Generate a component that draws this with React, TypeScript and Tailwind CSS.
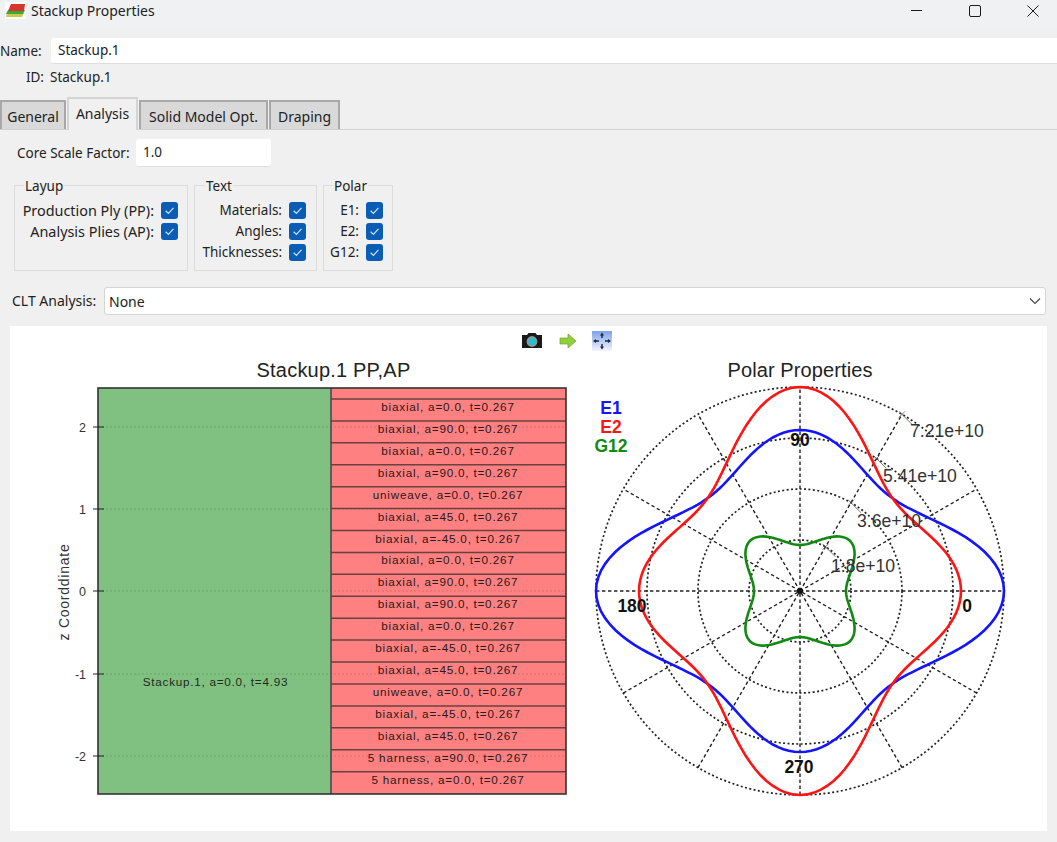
import React from "react";

const ui = { fontFamily: '"Noto Sans", "Open Sans", sans-serif' };
const plotFont = '"Liberation Sans", Arial, sans-serif';

const rows = [
  "biaxial, a=0.0, t=0.267",
  "biaxial, a=90.0, t=0.267",
  "biaxial, a=0.0, t=0.267",
  "biaxial, a=90.0, t=0.267",
  "uniweave, a=0.0, t=0.267",
  "biaxial, a=45.0, t=0.267",
  "biaxial, a=-45.0, t=0.267",
  "biaxial, a=0.0, t=0.267",
  "biaxial, a=90.0, t=0.267",
  "biaxial, a=90.0, t=0.267",
  "biaxial, a=0.0, t=0.267",
  "biaxial, a=-45.0, t=0.267",
  "biaxial, a=45.0, t=0.267",
  "uniweave, a=0.0, t=0.267",
  "biaxial, a=-45.0, t=0.267",
  "biaxial, a=45.0, t=0.267",
  "5 harness, a=90.0, t=0.267",
  "5 harness, a=0.0, t=0.267",
];

function Check({ label }: { label: string }) {
  return (
    <div className="flex h-[21px] items-center justify-end gap-[7px]">
      <span className="whitespace-nowrap">{label}</span>
      <span className="flex h-[17px] w-[17px] items-center justify-center rounded-[3px] bg-[#0a5db5]">
        <svg width="11" height="11" viewBox="0 0 10 10" fill="none">
          <path d="M1.5 5.2 4 7.6 8.6 2.6" stroke="#cfe2f5" strokeWidth="1.1" />
        </svg>
      </span>
    </div>
  );
}

function Group({ title, width, items, titleLeft }: { title: string; width: string; items: string[]; titleLeft: string }) {
  return (
    <div className={`relative h-[86px] border border-[#dcdcdc] pt-[14px] ${width}`}>
      <span className={`absolute -top-[9px] bg-[#f0f0f0] px-[1px] text-[13.5px] leading-[18px] ${titleLeft}`}>{title}</span>
      {items.map((i) => (
        <Check key={i} label={i} />
      ))}
    </div>
  );
}

function polarPath(a: number, b: number, c: number, cx: number, cy: number) {
  const pts: string[] = [];
  for (let d = 0; d <= 360; d += 2) {
    const t = (d * Math.PI) / 180;
    const s2 = Math.sin(t) ** 2;
    const c2 = Math.cos(t) ** 2;
    const r = 1 / (a * c2 * c2 + b * s2 * s2 + c * s2 * c2);
    pts.push(`${(cx + r * Math.cos(t)).toFixed(1)} ${(cy - r * Math.sin(t)).toFixed(1)}`);
  }
  return "M" + pts.join("L") + "Z";
}

function StackChart() {
  const top = 399;
  const h = 21.92;
  return (
    <svg width="580" height="476" viewBox="10 355 580 476" style={{ fontFamily: plotFont }}>
      <text x="333.5" y="377" textAnchor="middle" fontSize="20" letterSpacing="0.2" fill="#222">Stackup.1 PP,AP</text>
      <rect x="98" y="388" width="233" height="406" fill="#80c080" />
      <rect x="331" y="388" width="235" height="406" fill="#ff8080" />
      {[427, 509, 591, 674, 756].map((y) => (
        <line key={y} x1="98" x2="566" y1={y} y2={y} stroke="#000" strokeOpacity="0.14" strokeWidth="1" strokeDasharray="2 2" />
      ))}
      {rows.map((r, i) => (
        <g key={i}>
          <line x1="331" x2="566" y1={top + i * h} y2={top + i * h} stroke="#6a4040" strokeWidth="1.5" />
          <text x="448" y={top + i * h + 12} textAnchor="middle" fontSize="11.7" letterSpacing="0.8" fill="#2a1a1a">{r}</text>
        </g>
      ))}
      <line x1="331" x2="331" y1="388" y2="794" stroke="#4a4a4a" strokeWidth="1.6" />
      <rect x="98" y="388" width="468" height="406" fill="none" stroke="#333" strokeWidth="1.6" />
      <text x="215.5" y="686" textAnchor="middle" fontSize="11.7" letterSpacing="0.75" fill="#1d2d1d">Stackup.1, a=0.0, t=4.93</text>
      {[
        [427, "2"],
        [509, "1"],
        [591, "0"],
        [674, "-1"],
        [756, "-2"],
      ].map(([y, l]) => (
        <g key={l as string}>
          <line x1="93" x2="104" y1={y as number} y2={y as number} stroke="#222" strokeWidth="1" />
          <text x="86" y={(y as number) + 4.5} textAnchor="end" fontSize="12.5" fill="#333">{l}</text>
        </g>
      ))}
      <text transform="translate(69 592) rotate(-90)" textAnchor="middle" fontSize="14" letterSpacing="0.75" fill="#333">z Coorddinate</text>
    </svg>
  );
}

function PolarChart() {
  const cx = 800;
  const cy = 591;
  const e1 = polarPath(1 / 204, 1 / 161, 0.01942, cx, cy);
  const e2 = polarPath(1 / 161, 1 / 204, 0.01942, cx, cy);
  const g = polarPath(1 / 46, 1 / 46, 0.01301, cx, cy);
  const spokes = [0, 30, 60, 90, 120, 150];
  const marks = [
    [51, "1.8e+10", 831, 572],
    [102, "3.6e+10", 857, 527],
    [153, "5.41e+10", 883, 482],
    [204, "7.21e+10", 910, 437],
  ] as const;
  return (
    <svg width="457" height="476" viewBox="590 355 457 476" style={{ fontFamily: plotFont }}>
      <text x="800" y="377" textAnchor="middle" fontSize="20" letterSpacing="0.1" fill="#222">Polar Properties</text>
      {spokes.map((d) => {
        const t = (d * Math.PI) / 180;
        return (
          <line
            key={d}
            x1={cx - 204 * Math.cos(t)}
            y1={cy + 204 * Math.sin(t)}
            x2={cx + 204 * Math.cos(t)}
            y2={cy - 204 * Math.sin(t)}
            stroke="#222"
            strokeWidth="1.4"
            strokeDasharray="3.4 2.6"
          />
        );
      })}
      {[51, 102, 153, 204].map((r) => (
        <circle key={r} cx={cx} cy={cy} r={r} fill="none" stroke="#222" strokeWidth="1.7" strokeDasharray="2 2.4" />
      ))}
      <circle cx={cx} cy={cy} r="3" fill="#111" />
      <path d={e1} fill="none" stroke="#1414ff" strokeWidth="2.6" />
      <path d={e2} fill="none" stroke="#ff1414" strokeWidth="2.6" />
      <path d={g} fill="none" stroke="#118a11" strokeWidth="2.6" />
      {marks.map(([r, l, x, y]) => {
        const px = cx + r * Math.cos(Math.PI / 3);
        const py = cy - r * Math.sin(Math.PI / 3);
        return (
          <g key={r}>
            <line x1={px - 3} y1={py - 3} x2={px + 10} y2={py + 10} stroke="#555" strokeWidth="0.8" />
            <line x1={px - 3} y1={py + 3} x2={px + 3} y2={py - 3} stroke="#555" strokeWidth="0.8" />
            <text x={x} y={y} fontSize="17.6" fill="#333">{l}</text>
          </g>
        );
      })}
      <g fontSize="17.5" fontWeight="700" fill="#111" textAnchor="middle">
        <text x="800" y="446">90</text>
        <text x="632" y="612">180</text>
        <text x="967" y="612">0</text>
        <text x="799" y="773">270</text>
      </g>
      <g fontSize="17.5" fontWeight="700" textAnchor="middle">
        <text x="611" y="414" fill="#1414ff">E1</text>
        <text x="611" y="433" fill="#ff1414">E2</text>
        <text x="611" y="452" fill="#118a11">G12</text>
      </g>
    </svg>
  );
}

function Tab({ label, active, width }: { label: string; active?: boolean; width: string }) {
  return (
    <div
      className={`flex items-center justify-center border-2 border-b-0 text-[14px] ${width} ${
        active
          ? "z-10 -mb-[1px] h-[33px] border-[#d4d4d4] bg-[#f0f0f0] pb-[2px]"
          : "h-[29px] border-[#a8a8a8] bg-[#d9d9d9] pt-[1px]"
      }`}
    >
      {label}
    </div>
  );
}

export default function App() {
  return (
    <div className="flex h-[842px] w-[1057px] flex-col overflow-hidden bg-[#f0f0f0] text-[13.5px] text-[#222]" style={ui}>
      <div className="flex h-[30px] shrink-0 items-center bg-[#f0f1f2] pb-[9px]">
        <svg className="ml-[5px]" width="21" height="17" viewBox="0 0 21 17">
          <rect width="21" height="17" fill="#fdfdfd" />
          <path d="M2 11 L19 11 L17 15 L1 15 Z" fill="#c9c94a" />
          <path d="M3 8 L20 8 L18 12 L1 12 Z" fill="#3aa83a" />
          <path d="M6 2 L20 2 L19 9 L3 9 Z" fill="#d8342c" />
        </svg>
        <span className="ml-[5px] text-[14px]">Stackup Properties</span>
        <svg className="ml-auto" width="135" height="14" viewBox="0 0 135 14" fill="none" stroke="#1c1c1c" strokeWidth="1">
          <path d="M1 6.5H12" />
          <rect x="59.5" y="1.5" width="11" height="11" rx="1.5" />
          <path d="M117.5 1.5 128.5 12.5M128.5 1.5 117.5 12.5" />
        </svg>
        <span className="w-[12px]" />
      </div>

      <div className="mt-[8px] flex h-[26px] shrink-0 items-center">
        <span className="w-[51px]">Name:</span>
        <div className="flex h-[26px] flex-1 items-center rounded-l-[3px] border-b border-[#dedede] bg-white pl-[7px]">Stackup.1</div>
      </div>
      <div className="flex h-[26px] shrink-0 items-center">
        <span className="w-[44px] text-right">ID:</span>
        <span className="ml-[6px]">Stackup.1</span>
      </div>

      <div className="mt-[7px] flex h-[33px] shrink-0 items-end gap-[1px] border-b border-[#d0d0d0]">
        <Tab label="General" width="w-[66px]" />
        <Tab label="Analysis" active width="w-[71px]" />
        <Tab label="Solid Model Opt." width="w-[129px]" />
        <Tab label="Draping" width="w-[71px]" />
      </div>

      <div className="mt-[9px] flex h-[28px] shrink-0 items-center">
        <span className="ml-[17px] w-[119px]">Core Scale Factor:</span>
        <div className="flex h-[28px] w-[135px] items-center rounded-[3px] border-b border-[#dedede] bg-white pl-[7px]">1.0</div>
      </div>

      <div className="ml-[14px] mt-[18px] flex shrink-0 gap-[6px]">
        <div className="text-[14.4px]">
          <Group title="Layup" width="w-[174px] pr-[9px]" titleLeft="left-[9px]" items={["Production Ply (PP):", "Analysis Plies (AP):"]} />
        </div>
        <Group title="Text" width="w-[123px] pr-[10px]" titleLeft="left-[10px]" items={["Materials:", "Angles:", "Thicknesses:"]} />
        <Group title="Polar" width="w-[70px] pr-[9px]" titleLeft="left-[9px]" items={["E1:", "E2:", "G12:"]} />
      </div>

      <div className="mt-[16px] flex h-[28px] shrink-0 items-center text-[14px]">
        <span className="ml-[12px] w-[92px] pb-[2px]">CLT Analysis:</span>
        <div className="flex h-[28px] w-[942px] items-center justify-between rounded-[3px] border border-[#d4d4d4] bg-white pl-[4px] pr-[4px]">
          <span>None</span>
          <svg width="12" height="8" viewBox="0 0 12 8" fill="none" stroke="#444" strokeWidth="1.1">
            <path d="M1 1.5 6 6.5 11 1.5" />
          </svg>
        </div>
      </div>

      <div className="mx-[10px] mt-[11px] h-[505px] shrink-0 bg-white">
        <div className="flex h-[29px] items-center pl-[511px]">
          <svg width="22" height="17" viewBox="0 0 22 17">
            <path d="M1 3h5l1.5-2h7L16 3h5v13H1z" fill="#1a1a1a" />
            <circle cx="11" cy="9.5" r="5.4" fill="#8a9a9e" />
            <circle cx="11" cy="9.5" r="3.6" fill="#27c0cf" />
          </svg>
          <svg className="ml-[16px]" width="18" height="16" viewBox="0 0 18 16">
            <path d="M1 5h8V1l8 7-8 7v-4H1z" fill="#92cf3c" stroke="#6ea02a" strokeWidth="0.7" />
          </svg>
          <svg className="ml-[15px]" width="20" height="20" viewBox="0 0 20 20">
            <defs>
              <linearGradient id="fitbg" x1="0" y1="0" x2="0" y2="1">
                <stop offset="0" stopColor="#7ea2ea" />
                <stop offset="1" stopColor="#f2f5fd" />
              </linearGradient>
            </defs>
            <rect width="20" height="20" fill="url(#fitbg)" />
            <path d="M10 4v3M10 13v3M3 10h4M13 10h4" fill="none" stroke="#1c2440" strokeWidth="1.4" />
            <path d="M10 1.5 8 4.5h4zM10 18.5 8 15.5h4zM1 10 4 8v4zM19 10 16 8v4z" fill="#1c2440" />
          </svg>
        </div>
        <div className="flex">
          <StackChart />
          <PolarChart />
        </div>
      </div>
    </div>
  );
}
